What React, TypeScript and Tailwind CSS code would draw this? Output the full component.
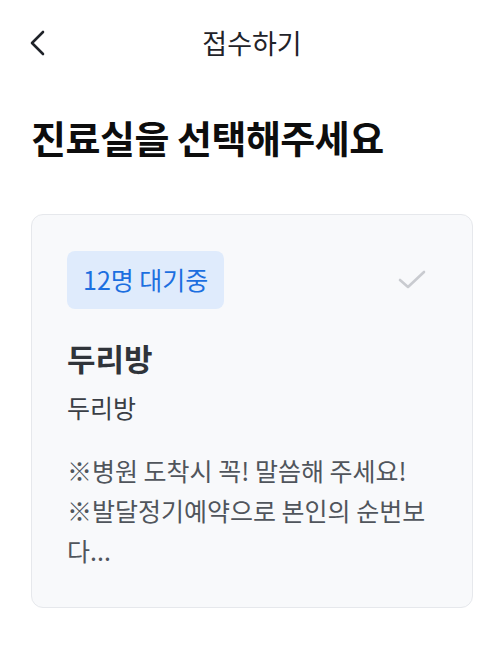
import React from 'react';

const FONT = "font-['Noto_Sans_CJK_KR','Noto_Sans',sans-serif]";

const rooms = [
  {
    waiting: 12,
    name: '두리방',
    sub: '두리방',
    notes: '※병원 도착시 꼭! 말씀해 주세요!\n※발달정기예약으로 본인의 순번보다...',
  },
];

const App = () => {
  return (
    <div className={`min-h-screen bg-white ${FONT}`}>
      {/* Header */}
      <div className="relative flex h-[86px] items-center justify-center">
        <button className="absolute left-[24px] top-[29px] flex h-[28px] w-[26px] items-center justify-center">
          <svg width="18" height="26" viewBox="0 0 18 26" fill="none">
            <polyline
              points="15,2 4,13 15,24"
              stroke="#1f2329"
              strokeWidth="2.6"
              strokeLinecap="round"
              strokeLinejoin="round"
            />
          </svg>
        </button>
        <h1 className="text-[27px] leading-none text-[#1f2329] -mt-[1px]">접수하기</h1>
      </div>

      <div className="px-[31px]">
        <h2 className="mt-[32px] text-[38px] font-bold leading-none tracking-[-0.5px] text-[#0d0d0d]">
          진료실을 선택해주세요
        </h2>

        <div className="mt-[58px] flex flex-col gap-4">
          {rooms.map((room, index) => (
            <div
              key={index}
              className="rounded-[12px] border border-[#e6e8ec] bg-[#f8f9fb] px-[35px] pb-[37px] pt-[36px]"
            >
              <div className="flex items-center justify-between">
                <span className="flex h-[58px] items-center rounded-[8px] bg-[#dfebfc] px-[16px] text-[25px] text-[#1c6fe0]">
                  {room.waiting}명 대기중
                </span>
                <svg width="30" height="22" viewBox="0 0 30 22" fill="none" className="mr-[10px]">
                  <polyline
                    points="3,11 11,18 27,3"
                    stroke="#c9cbd0"
                    strokeWidth="2.6"
                    strokeLinecap="round"
                    strokeLinejoin="round"
                  />
                </svg>
              </div>
              <h3 className="mt-[33px] text-[31px] font-bold leading-none text-[#30343a]">{room.name}</h3>
              <p className="mt-[22px] text-[25px] leading-none text-[#3a3e45]">{room.sub}</p>
              <p className="mt-[30px] whitespace-pre-line text-[25px] leading-[40px] text-[#50555c]">
                {room.notes}
              </p>
            </div>
          ))}
        </div>
      </div>
    </div>
  );
};

export default App;
